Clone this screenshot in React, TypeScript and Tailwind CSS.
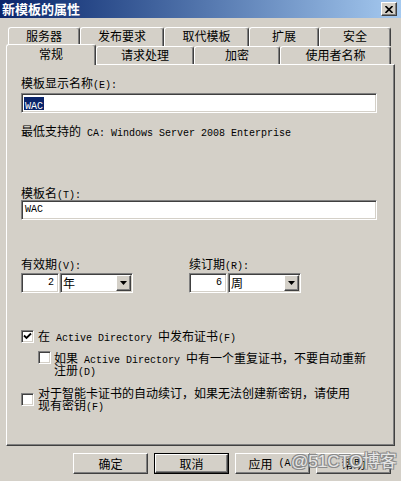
import React from 'react';

const raised =
  'bg-[#d4d0c8] border border-t-white border-l-white border-r-[#404040] border-b-[#404040] shadow-[inset_-1px_-1px_0_#808080]';
const sunken =
  'bg-white border border-t-[#808080] border-l-[#808080] border-r-white border-b-white shadow-[inset_1px_1px_0_#404040,inset_-1px_-1px_0_#d4d0c8]';

// SimSun-like half-width latin
const M: React.FC<{ children: React.ReactNode }> = ({ children }) => (
  <span className="font-['Liberation_Mono',monospace] text-[10px] leading-[10px] whitespace-pre">{children}</span>
);

const topTabs = [
  { label: '服务器', w: 'w-[72px]' },
  { label: '发布要求', w: 'w-[84px]' },
  { label: '取代模板', w: 'w-[85px]' },
  { label: '扩展', w: 'w-[70px]' },
  { label: '安全', w: 'w-[72px]' },
];

const frontTabs = [
  { label: '请求处理', w: 'w-[98px]' },
  { label: '加密', w: 'w-[86px]' },
  { label: '使用者名称', w: 'w-[111px]' },
];

const tabEdge =
  'flex items-start justify-center pt-[1px] leading-[14px] bg-[#d4d0c8] border-l border-t border-r border-l-white border-t-white border-r-[#404040] rounded-t-[3px] shadow-[inset_-1px_0_0_#808080]';

const Checkbox: React.FC<{ checked?: boolean }> = ({ checked }) => (
  <div className={`relative w-[13px] h-[13px] shrink-0 ${sunken}`}>
    {checked && (
      <svg className="absolute left-[1px] top-[1px]" width="9" height="9" viewBox="0 0 9 9">
        <path d="M1 3.5 L3.5 6 L8 1.5" stroke="#000" strokeWidth="1.8" fill="none" />
      </svg>
    )}
  </div>
);

const Combo: React.FC<{ num: string; unit: string }> = ({ num, unit }) => (
  <div className="flex gap-[1px]">
    <div className={`w-[38px] h-[20px] flex items-center justify-end pr-[4px] ${sunken}`}>
      <M>{num}</M>
    </div>
    <div className={`w-[73px] h-[20px] flex items-center justify-between pl-[2px] pr-[1px] ${sunken}`}>
      <span className="h-[14px] leading-[14px]">{unit}</span>
      <div className={`w-[15px] h-[16px] flex items-center justify-center ${raised}`}>
        <svg width="7" height="4" viewBox="0 0 7 4">
          <path d="M0 0 H7 L3.5 4 Z" fill="#000" />
        </svg>
      </div>
    </div>
  </div>
);

export default function App() {
  return (
    <div className="relative w-[401px] h-[481px] overflow-hidden bg-[#d4d0c8] text-black text-[12px] font-['Noto_Sans_CJK_SC',sans-serif]">
      {/* title bar */}
      <div className="h-[18px] flex items-center justify-between pl-[2px] pr-[4px] bg-gradient-to-r from-[#0a246a] to-[#a6caf0]">
        <span className="text-white font-bold text-[13px] leading-[16px]">新模板的属性</span>
        <div className={`w-[16px] h-[14px] flex items-center justify-center ${raised}`}>
          <svg width="8" height="7" viewBox="0 0 8 7">
            <path d="M0.5 0 L7.5 7 M7.5 0 L0.5 7" stroke="#000" strokeWidth="1.6" />
          </svg>
        </div>
      </div>

      {/* tabs */}
      <div className="mt-[9px] mx-[6px]">
        <div className="h-[19px] flex pl-[2px]">
          {topTabs.map(t => (
            <div key={t.label} className={`${t.w} h-[19px] ${tabEdge}`}>
              {t.label}
            </div>
          ))}
        </div>
        <div className="h-[18px] flex items-end">
          <div className={`relative top-[1px] z-10 w-[90px] h-[21px] ${tabEdge} pt-[2px]`}>常规</div>
          {frontTabs.map(t => (
            <div key={t.label} className={`${t.w} h-[18px] ${tabEdge}`}>
              {t.label}
            </div>
          ))}
        </div>
      </div>

      {/* panel */}
      <div className="mx-[6px] h-[382px] border border-t-white border-l-white border-r-[#404040] border-b-[#404040] shadow-[inset_-1px_-1px_0_#808080] pl-[14px] pt-[11px] flex flex-col">
        <div className="h-[14px] leading-[14px]">
          模板显示名称<M>(E):</M>
        </div>
        <div className={`mt-[3px] w-[356px] h-[20px] flex items-center pl-[2px] ${sunken}`}>
          <span className="bg-[#0a246a] text-white h-[13px] leading-[13px] px-[1px]">
            <M>WAC</M>
          </span>
        </div>
        <div className="mt-[11px] h-[14px] leading-[14px]">
          最低支持的<M> CA: Windows Server 2008 Enterprise</M>
        </div>

        <div className="mt-[48px] h-[14px] leading-[14px]">
          模板名<M>(T):</M>
        </div>
        <div className={`w-[356px] h-[20px] flex items-center pl-[3px] ${sunken}`}>
          <M>WAC</M>
        </div>

        <div className="mt-[37px] flex">
          <div className="w-[168px] flex flex-col">
            <div className="h-[14px] leading-[14px]">
              有效期<M>(V):</M>
            </div>
            <div className="mt-[2px]">
              <Combo num="2" unit="年" />
            </div>
          </div>
          <div className="flex flex-col">
            <div className="h-[14px] leading-[14px]">
              续订期<M>(R):</M>
            </div>
            <div className="mt-[2px]">
              <Combo num="6" unit="周" />
            </div>
          </div>
        </div>

        <div className="mt-[36px] flex items-center gap-[4px] h-[14px]">
          <Checkbox checked />
          <span className="h-[14px] leading-[14px]">
            在<M> Active Directory </M>中发布证书<M>(F)</M>
          </span>
        </div>

        <div className="mt-[8px] ml-[17px] h-[25px] flex items-start gap-[3px]">
          <Checkbox />
          <div className="mt-[1px] flex flex-col">
            <div className="h-[12px] leading-[12px]">
              如果<M> Active Directory </M>中有一个重复证书，不要自动重新
            </div>
            <div className="h-[12px] leading-[12px]">
              注册<M>(D)</M>
            </div>
          </div>
        </div>

        <div className="mt-[11px] h-[24px] flex items-center gap-[4px]">
          <Checkbox />
          <div className="flex flex-col">
            <div className="h-[12px] leading-[12px]">
              对于智能卡证书的自动续订，如果无法创建新密钥，请使用
            </div>
            <div className="h-[12px] leading-[12px]">
              现有密钥<M>(F)</M>
            </div>
          </div>
        </div>
      </div>

      {/* buttons */}
      <div className="mt-[7px] flex justify-end gap-[6px] pr-[10px]">
        <div className={`w-[75px] h-[21px] flex items-center justify-center ${raised}`}>确定</div>
        <div className="w-[75px] h-[21px] border border-black">
          <div className={`w-full h-full flex items-center justify-center ${raised}`}>取消</div>
        </div>
        <div className={`w-[75px] h-[21px] flex items-center justify-center ${raised}`}>
          应用<M> (A)</M>
        </div>
        <div className={`w-[75px] h-[21px] flex items-center justify-center ${raised}`}>帮助</div>
      </div>

      {/* watermark */}
      <span className="absolute left-[291px] top-[452px] text-[17px] leading-[20px] text-[#e6e6e6] font-['Liberation_Sans','Noto_Sans_CJK_SC',sans-serif] [text-shadow:1px_1px_0_#8a8a8a,-1px_-1px_0_#8a8a8a,1px_-1px_0_#8a8a8a,-1px_1px_0_#8a8a8a]">
        @51CTO博客
      </span>
    </div>
  );
}
